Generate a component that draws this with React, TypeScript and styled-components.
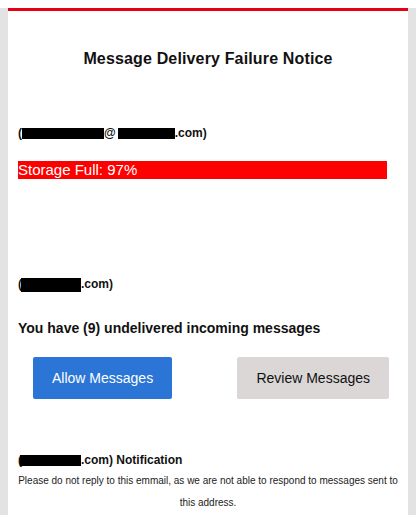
import React from "react";
import styled, { createGlobalStyle } from "styled-components";

const Global = createGlobalStyle`
  html, body { background: #ffffff; }
  body {
    margin: 8px 0 0 0;
    font-family: "Liberation Sans", Arial, sans-serif;
    color: #111111;
  }
`;

const Backdrop = styled.div`
  background: #e3e3e3;
  padding: 0 8px;
`;

const Card = styled.div`
  background: #ffffff;
  border-top: 3px solid #e60012;
  padding: 0 10px 1px 10px;
`;

const Title = styled.h1`
  margin: 39px 0 0 0;
  font-size: 16px;
  line-height: 18px;
  font-weight: bold;
  letter-spacing: 0.15px;
  text-align: center;
  color: #111111;
`;

const Line = styled.div<{ $top: number }>`
  margin-top: ${(p) => p.$top}px;
  font-size: 12px;
  line-height: 14px;
  font-weight: bold;
  white-space: nowrap;
`;

const Redacted = styled.span<{ $w: number; $h: number; $shift?: number }>`
  display: inline-block;
  width: ${(p) => p.$w}px;
  height: ${(p) => p.$h}px;
  margin-left: ${(p) => p.$shift ?? 0}px;
  background: #000000;
  vertical-align: ${(p) => (p.$h > 12 ? "-4px" : "-2px")};
`;

const StorageBar = styled.div`
  margin-top: 21px;
  width: 97%;
  background: #ff0000;
  color: #ffffff;
  font-size: 15px;
  line-height: 18px;
`;

const Headline = styled.div`
  margin-top: 28px;
  font-size: 14px;
  line-height: 16px;
  font-weight: bold;
`;

const ButtonRow = styled.div`
  margin-top: 21px;
  display: flex;
  justify-content: space-between;
  padding: 0 9px 0 15px;
`;

const Button = styled.a<{ $variant: "primary" | "secondary" }>`
  display: flex;
  align-items: center;
  justify-content: center;
  height: 42px;
  padding: 0 ${(p) => (p.$variant === "primary" ? 19 : 19)}px;
  border-radius: 2px;
  font-size: 14px;
  text-decoration: none;
  background: ${(p) => (p.$variant === "primary" ? "#2a75d6" : "#dbd7d7")};
  color: ${(p) => (p.$variant === "primary" ? "#ffffff" : "#111111")};
`;

const Footer = styled.p`
  margin: 3px 0 0 0;
  font-size: 10px;
  line-height: 22px;
  text-align: center;
  color: #222222;
`;

export default function App() {
  return (
    <>
      <Global />
      <Backdrop>
        <Card>
          <Title>Message Delivery Failure Notice</Title>
          <Line $top={58}>
            (<Redacted $w={82} $h={11} />@<Redacted $w={57} $h={11} $shift={2} />.com)
          </Line>
          <StorageBar>Storage Full: 97%</StorageBar>
          <Line $top={98}>
            (<Redacted $w={60} $h={14} $shift={-1} />.com)
          </Line>
          <Headline>You have (9) undelivered incoming messages</Headline>
          <ButtonRow>
            <Button $variant="primary">Allow Messages</Button>
            <Button $variant="secondary">Review Messages</Button>
          </ButtonRow>
          <Line $top={54}>
            (<Redacted $w={61} $h={11} $shift={-2} />.com) Notification
          </Line>
          <Footer>
            Please do not reply to this emmail, as we are not able to respond to messages sent to this address.
          </Footer>
        </Card>
      </Backdrop>
    </>
  );
}
